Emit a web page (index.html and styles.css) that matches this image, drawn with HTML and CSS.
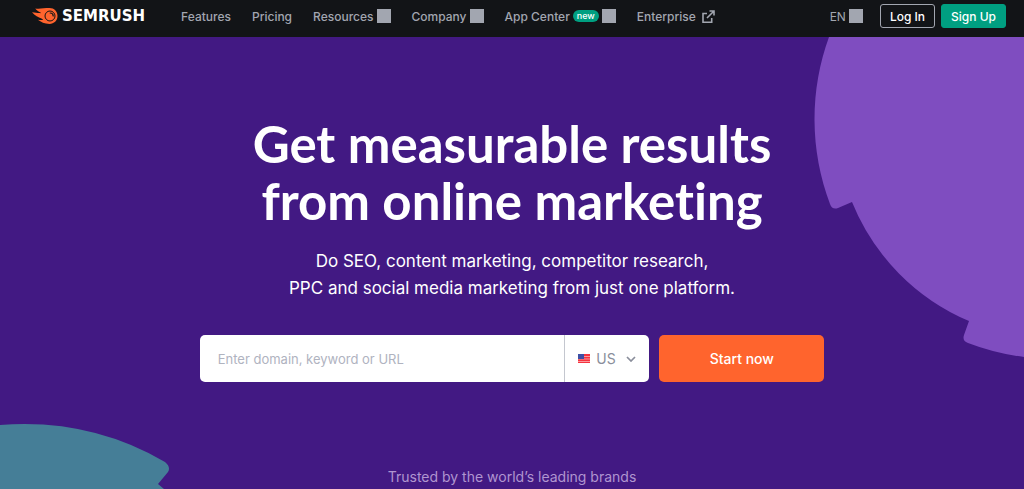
FILE: index.html
```html
<!DOCTYPE html>
<html lang="en">
<head>
    <meta charset="UTF-8">
    <meta name="viewport" content="width=device-width, initial-scale=1.0">
    <title>Semrush - Online Visibility Management Platform</title>
    <link rel="stylesheet" href="styles.css">
</head>
<body>
    <!-- Header -->
    <header class="header">
        <a class="logo" href="#">
            <svg class="logo-icon" width="26" height="16" viewBox="0 0 26 16" aria-hidden="true">
                <path fill="#ff642d" d="M0 4.2c3 .5 5.5.7 7.2.9C9.5 5.4 9 4.8 8 4.3 6.2 3.4 4 1.9 3.3.5 7 1.3 12 .1 17.5.1c4.7 0 8 3.4 8 7.9s-3.5 7.9-8 7.9c-5 0-8.5-2-11.7-4.2 2 .3 4 .5 4.8.2.7-.3.1-1-1.2-1.5C6.5 9.2 2.8 7.6 0 4.2z"/>
                <circle cx="18" cy="8" r="5" fill="none" stroke="#121417"/>
                <path d="M18.2 5a3 3 0 0 1 3 3" fill="none" stroke="#121417" stroke-width="1.2" stroke-linecap="round"/>
            </svg>
            <span class="logo-text">SEMRUSH</span>
        </a>
        <nav class="nav">
            <a href="#">Features</a>
            <a href="#">Pricing</a>
            <a href="#">Resources <span class="square"></span></a>
            <a href="#">Company <span class="square"></span></a>
            <a href="#">App Center <span class="badge">new</span><span class="square"></span></a>
            <a class="enterprise" href="#">Enterprise
                <svg width="13" height="13" viewBox="0 0 13 13" fill="none" stroke="currentColor" stroke-width="1.6" aria-hidden="true">
                    <path d="M5 3.5H1v8.7h8.7V8M7.5 1H12v4.5M12 1 5 8"/>
                </svg>
            </a>
        </nav>
        <div class="actions">
            <a class="language" href="#">EN <span class="square"></span></a>
            <button class="btn login" type="button">Log In</button>
            <button class="btn signup" type="button">Sign Up</button>
        </div>
    </header>

    <!-- Hero -->
    <main class="hero">
        <svg class="shape shape-right" width="210" height="330" viewBox="814 37 210 330" aria-hidden="true">
            <path fill="#7f4dc0" d="M829 37A240 240 0 0 0 830 204Q832 210 838 208L852 202A218 218 0 0 0 969 321L964 335Q962 341 968 343A240 240 0 0 0 1024 357V37Z"/>
        </svg>
        <svg class="shape shape-left" width="170" height="65" viewBox="0 424 170 65" aria-hidden="true">
            <path fill="#457e97" d="M0 425Q90 418 165 462Q171 467 168 472L158 484L164 489H0Z"/>
        </svg>

        <h1>Get measurable results<br>from online marketing</h1>
        <p class="subtitle">Do SEO, content marketing, competitor research,<br>PPC and social media marketing from just one platform.</p>

        <form class="search">
            <div class="field">
                <input type="text" placeholder="Enter domain, keyword or URL" aria-label="Domain, keyword or URL">
                <div class="country">
                    <svg class="flag" width="12" height="9" viewBox="0 0 12 9" aria-hidden="true">
                        <rect width="12" height="9" fill="#f5333f"/>
                        <path d="M0 2.5h12M0 5h12M0 7.5h12" stroke="#fff" stroke-opacity=".5"/>
                        <rect width="6" height="5" fill="#3d4fa5"/>
                    </svg>
                    <select aria-label="Country">
                        <option>US</option>
                        <option>UK</option>
                        <option>DE</option>
                    </select>
                    <svg class="chevron" width="10" height="6" viewBox="0 0 10 6" fill="none" stroke="#8a8e9b" stroke-width="1.7" aria-hidden="true">
                        <path d="M1 1l4 4 4-4"/>
                    </svg>
                </div>
            </div>
            <button class="start" type="submit">Start now</button>
        </form>

        <p class="trusted">Trusted by the world’s leading brands</p>
    </main>
</body>
</html>
```

FILE: styles.css
```css
* {
    box-sizing: border-box;
}

body {
    margin: 0;
    min-height: 100vh;
    display: flex;
    flex-direction: column;
    font-family: Inter, "Liberation Sans", sans-serif;
    background: #421983;
    color: #fff;
}

a {
    color: inherit;
    text-decoration: none;
}

button, input, select {
    font-family: inherit;
}

/* Header */
.header {
    display: flex;
    align-items: center;
    padding: 4px 18px 9px 32px;
    background: #121417;
    color: #a2a6b0;
    font-size: 12px;
    font-weight: 500;
    white-space: nowrap;
}

.logo {
    display: flex;
    align-items: center;
    gap: 4px;
    color: #fff;
}

.logo-text {
    font-family: "DejaVu Sans", sans-serif;
    font-size: 15px;
    font-weight: 700;
    line-height: 16px;
}

.nav {
    display: flex;
    gap: 21px;
    margin-left: 36px;
}

.nav a, .language {
    display: flex;
    align-items: center;
    gap: 3px;
}

.nav .enterprise {
    gap: 6px;
}

.square {
    width: 14px;
    height: 14px;
    background: #a2a6b0;
}

.badge {
    height: 12px;
    padding: 0 4px;
    border-radius: 6px;
    background: #009f81;
    color: #fff;
    font-size: 9px;
    line-height: 11px;
}

.actions {
    display: flex;
    align-items: center;
    gap: 6px;
    margin-left: auto;
}

.language {
    margin-right: 11px;
    font-weight: 400;
}

.btn {
    height: 24px;
    padding: 0 9px;
    border: 1px solid #a2a6b0;
    border-radius: 3px;
    background: transparent;
    color: #fff;
    font-size: 12px;
    font-weight: 500;
    cursor: pointer;
}

.signup {
    border-color: #009f81;
    background: #009f81;
}

/* Hero */
.hero {
    position: relative;
    flex: 1;
    padding-top: 78px;
    overflow: hidden;
    text-align: center;
}

/* Background shapes behind the text */
.shape {
    position: absolute;
    z-index: 0;
}

.shape-right {
    top: 0;
    right: 0;
}

.shape-left {
    bottom: 0;
    left: 0;
}

h1, .subtitle, .search, .trusted {
    position: relative;
    z-index: 1;
}

h1 {
    margin: 0;
    font-family: Lato, sans-serif;
    font-size: 51px;
    font-weight: 700;
    font-variant-ligatures: none;
    line-height: 57px;
}

.subtitle {
    margin: 19px 0 0;
    font-size: 17px;
    line-height: 27px;
}

/* Search form */
.search {
    display: flex;
    gap: 10px;
    width: 61%;
    margin: 33px auto 0;
}

.field {
    display: flex;
    flex: 1;
    height: 47px;
    border-radius: 5px;
    background: #fff;
    overflow: hidden;
}

.field input {
    flex: 1;
    min-width: 0;
    padding: 0 18px;
    border: none;
    background: transparent;
    font-size: 13px;
}

.field input::placeholder {
    color: #b0b3bf;
    opacity: 1;
}

.country {
    display: flex;
    align-items: center;
    padding: 0 13px;
    border-left: 1px solid #c4c7cf;
}

.country select {
    width: 30px;
    margin-left: 6px;
    padding: 0;
    border: none;
    appearance: none;
    background: transparent;
    color: #8a8e9b;
    font-size: 14px;
}

.start {
    width: 165px;
    height: 47px;
    border: none;
    border-radius: 5px;
    background: #ff642d;
    color: #fff;
    font-size: 14px;
    font-weight: 500;
    cursor: pointer;
}

.trusted {
    margin: 84px 0 0;
    color: #b095d0;
    font-size: 14px;
    line-height: 22px;
}
```
